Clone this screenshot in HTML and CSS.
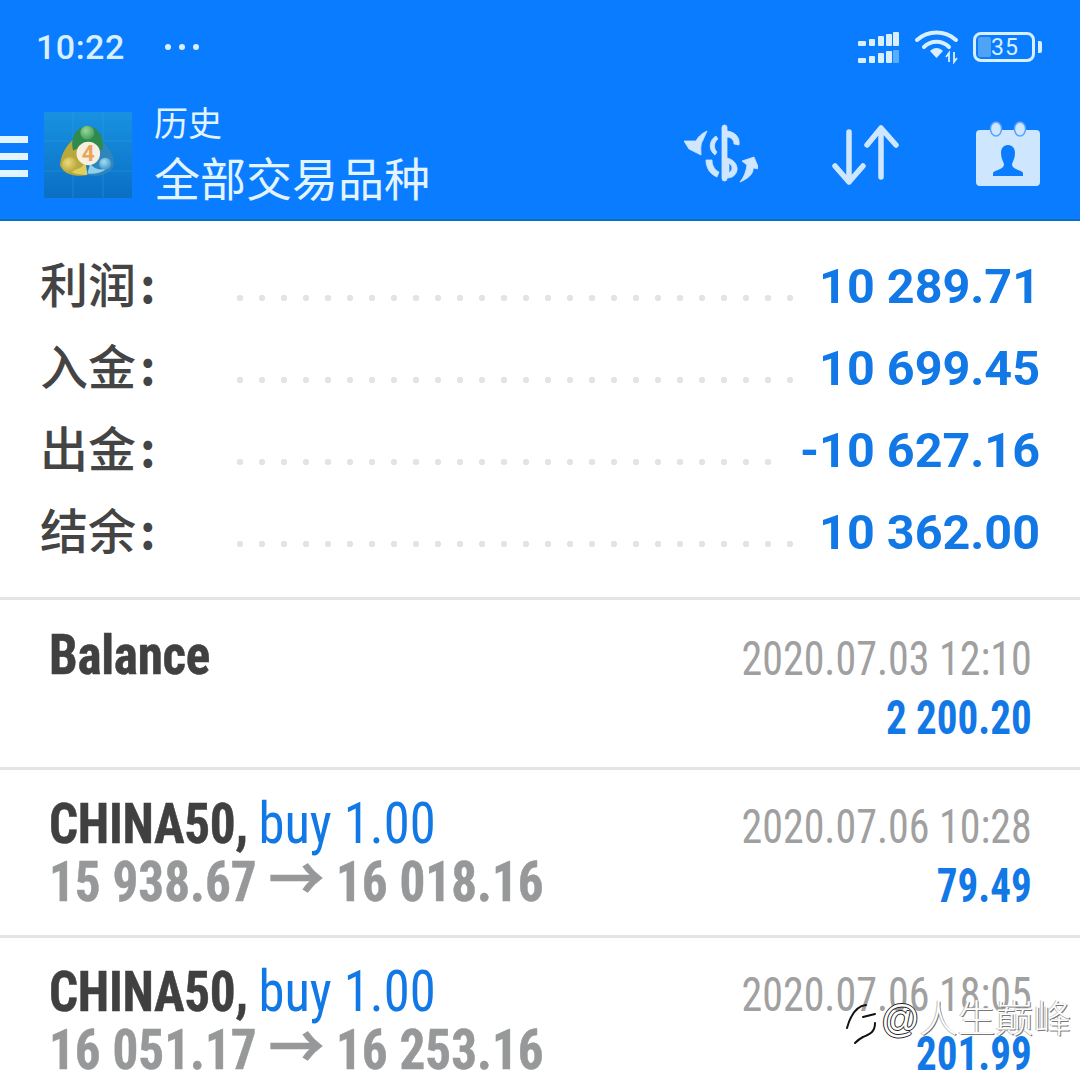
FILE: index.html
```html
<!DOCTYPE html>
<html lang="zh">
<head>
<meta charset="utf-8">
<title>历史</title>
<link rel="stylesheet" href="styles.css">
</head>
<body>
<div class="phone">
<header class="top">
  <div class="status">
    <div class="status-left"><span class="time">10:22</span><span class="more"><i></i><i></i><i></i></span></div>
    <div class="status-right">
      <svg class="signal" width="42" height="32" viewBox="0 0 42 32"><g fill="#d8efff"><rect x="0" y="9" width="8" height="5" rx="1"/><rect x="11" y="7" width="6" height="7" rx="1"/><rect x="20" y="4" width="6" height="10" rx="1"/><rect x="28" y="2" width="6" height="12" rx="1"/><rect x="35" y="0" width="6" height="14" rx="1"/><rect x="0" y="26" width="8" height="5" rx="1"/><rect x="11" y="24" width="6" height="7" rx="1"/><rect x="20" y="21" width="6" height="10" rx="1"/><rect x="28" y="19" width="6" height="12" rx="1"/><rect x="35" y="18" width="6" height="13" rx="1" fill="#5aaeff"/></g></svg>
      <svg class="wifi" width="44" height="34" viewBox="0 0 44 34"><g fill="none" stroke="#d8efff" stroke-width="4" stroke-linecap="round"><path d="M2 10C13 0 30 0 41 10"/><path d="M9 17C16 10 27 10 34 17"/></g><path d="M15 21C19 17 24 17 28 21L21.500 28Z" fill="#d8efff"/><path d="M34 32V23L31 27M39 22V32L42 28" fill="none" stroke="#d8efff" stroke-width="1.800"/></svg>
      <div class="battery"><div class="cell"><span class="charge"></span><span class="level">35</span></div><span class="nub"></span></div>
    </div>
  </div>
  <div class="bar">
    <div class="burger"><i></i><i></i><i></i></div>
    <svg class="logo" width="88" height="86" viewBox="0 0 88 86">
      <defs>
        <linearGradient id="lg" x1="0" y1="0" x2="0" y2="1"><stop offset="0" stop-color="#1892e0"/><stop offset="1" stop-color="#0b6fc4"/></linearGradient>
        <radialGradient id="gh" cx=".4" cy=".35" r=".7"><stop offset="0" stop-color="#9ad79a"/><stop offset="1" stop-color="#3d9a55"/></radialGradient>
        <radialGradient id="yh" cx=".4" cy=".35" r=".7"><stop offset="0" stop-color="#e8db7c"/><stop offset="1" stop-color="#b9a538"/></radialGradient>
        <radialGradient id="bh" cx=".4" cy=".35" r=".7"><stop offset="0" stop-color="#a5dcf0"/><stop offset="1" stop-color="#3a93c8"/></radialGradient>
      </defs>
      <rect width="88" height="86" fill="url(#lg)"/>
      <path d="M29 0V86M59 0V86M0 29H88M0 59H88" stroke="#3aa6e6" stroke-width="1" opacity=".35"/>
      <g transform="translate(2 1) scale(.94)">
        <path d="M44 66C32 68 20 66 15 56C15 44 24 30 33 26L42 52Z" fill="#b9a93c"/>
        <path d="M44 66C32 66 24 62 21 58C30 62 38 60 42 52Z" fill="#e0cf5e"/>
        <path d="M44 66C54 68 67 66 72 56C73 44 66 34 58 30L48 52Z" fill="#2f86bd"/>
        <path d="M44 64C54 66 62 62 66 58C58 62 52 60 47 54Z" fill="#8fd0ec"/>
        <path d="M29 40C25 26 33 14 44 14C56 14 63 28 60 40L45 33Z" fill="#2f8a4c"/>
        <circle cx="44" cy="21" r="7.500" fill="url(#gh)"/>
        <circle cx="25" cy="55" r="8" fill="url(#yh)"/>
        <circle cx="63" cy="54" r="6.500" fill="url(#bh)"/>
        <circle cx="45" cy="43" r="12.500" fill="#f6efe2"/>
        <text class="logo-four" x="45" y="51" text-anchor="middle">4</text>
      </g>
    </svg>
    <div class="titles">
      <div class="sub">历史</div>
      <div class="main">全部交易品种</div>
    </div>
    <div class="actions">
      <svg class="act-dollar" width="74" height="62" viewBox="0 0 74 62"><g fill="#cfe6ff" stroke="#cfe6ff" stroke-width=".8"><rect x="38" y="3" width="5" height="56" rx="2.500"/><path d="M43 9C52 10 56 16 55 23L50 22C50 18 47 15 43 15Z"/><path d="M32 14C25 18 24 28 31 33L33 30C29 26 30 20 34 17Z"/><path fill-rule="evenodd" d="M43 36C52 38 55 46 52 51C50 55 46 56 43 56ZM45 41V51C49 48 49 44 45 41Z"/><path d="M22 38C22 46 26 52 33 55L35 50C31 48 28 44 28 38Z"/><path d="M23 9C17 12 14 15 12 19L0 19L5 27L17 33C17 27 16 23 19 18C20 15 22 12 23 9Z"/><path d="M56 60C63 57 70 52 69 46L75 47L70 35L58 39L63 43C62 50 60 55 56 60Z"/></g></svg>
      <svg class="act-sort" width="70" height="62" viewBox="0 0 70 62"><g fill="none" stroke="#cfe6ff" stroke-width="5.500" stroke-linecap="round" stroke-linejoin="round"><path d="M18 7V57M4 41L18 57L32 41"/><path d="M50 3V52M36 20L50 3L65 20"/></g></svg>
      <svg class="act-cal" width="64" height="66" viewBox="0 0 64 66"><path d="M4 9H60Q64 9 64 13V61Q64 65 60 65H4Q0 65 0 61V13Q0 9 4 9Z" fill="#cfe6ff"/><g fill="#cfe6ff" stroke="#5aa6ff" stroke-width="1.500"><ellipse cx="20" cy="8" rx="5.500" ry="7"/><ellipse cx="44" cy="8" rx="5.500" ry="7"/></g><path d="M32 24C27 24 25 28 25 32C25 37 27 40 28 43C28 46 26 47 22 49C19 50 17 51 17 52V55H47V52C47 51 45 50 42 49C38 47 36 46 36 43C37 40 39 37 39 32C39 28 37 24 32 24Z" fill="#0a7cff"/></svg>
    </div>
  </div>
</header>
<main>
  <section class="summary">
    <div class="sum-row"><span class="sum-label">利润<span class="colon">:</span></span><span class="dots"></span><span class="sum-val">10 289.71</span></div>
    <div class="sum-row"><span class="sum-label">入金<span class="colon">:</span></span><span class="dots"></span><span class="sum-val">10 699.45</span></div>
    <div class="sum-row"><span class="sum-label">出金<span class="colon">:</span></span><span class="dots"></span><span class="sum-val">-10 627.16</span></div>
    <div class="sum-row"><span class="sum-label">结余<span class="colon">:</span></span><span class="dots"></span><span class="sum-val">10 362.00</span></div>
  </section>
  <section class="deal deal-balance">
    <div class="deal-left"><div class="line"><b class="sym">Balance</b></div></div>
    <div class="deal-right"><div class="date">2020.07.03 12:10</div><div class="profit">2 200.20</div></div>
  </section>
  <section class="deal">
    <div class="deal-left"><div class="line"><b class="sym">CHINA50,</b> <span class="buy">buy 1.00</span></div><div class="line prices">15 938.67 <span class="arrow">→</span> 16 018.16</div></div>
    <div class="deal-right"><div class="date">2020.07.06 10:28</div><div class="profit">79.49</div></div>
  </section>
  <section class="deal">
    <div class="deal-left"><div class="line"><b class="sym">CHINA50,</b> <span class="buy">buy 1.00</span></div><div class="line prices">16 051.17 <span class="arrow">→</span> 16 253.16</div></div>
    <div class="deal-right"><div class="date">2020.07.06 18:05</div><div class="profit">201.99</div></div>
  </section>
</main>
<div class="mark">
  <svg class="mark-icon" width="34" height="42" viewBox="0 0 34 42"><g fill="none" stroke="#111" stroke-width="2" stroke-linecap="round"><path d="M1 25C4 14 10 3 20 2"/><path d="M17 14L29 11"/><path d="M29 20C29 29 24 31 17 34C13 36 11 38 9 40"/></g></svg>
  <span class="mark-text"><span class="at">@</span>人生巅峰</span>
</div>
</div>
</body>
</html>
```
FILE: styles.css
```css
* { box-sizing: border-box; }
html, body { margin: 0; padding: 0; background: #fff; }
.phone { position: relative; width: 1080px; height: 1076px; overflow: hidden; background: #fff; font-family: Roboto, "Noto Sans CJK SC", sans-serif; }
.top { height: 221px; background: #0a7cff; border-bottom: 2px solid #0a6fc0; color: #e2f4ff; }
.status { height: 94px; display: flex; justify-content: space-between; align-items: center; padding: 0 38px 0 36px; }
.status-left { display: flex; align-items: center; gap: 40px; }
.time { font-size: 34px; font-weight: 500; letter-spacing: 0.5px; color: #d8efff; }
.more { display: flex; gap: 8px; }
.more i { width: 6px; height: 6px; border-radius: 50%; background: #d8efff; }
.status-right { display: flex; align-items: center; gap: 13px; }
.signal { margin-top: 2px; }
.wifi { margin-left: 2px; }
.battery { display: flex; align-items: center; gap: 3px; margin-left: 1px; }
.cell { position: relative; width: 62px; height: 30px; border: 3.500px solid #d8efff; border-radius: 8px; display: flex; align-items: center; justify-content: center; }
.charge { position: absolute; left: 2px; top: 2px; bottom: 2px; width: 13px; background: #4fa3f5; border-radius: 2px; }
.level { position: relative; font-size: 23px; line-height: 1; color: #d8efff; letter-spacing: 1px; margin-left: 2px; }
.nub { width: 4px; height: 12px; background: #d8efff; border-radius: 0 2px 2px 0; }
.bar { height: 125px; display: flex; align-items: flex-start; }
.burger { width: 28px; display: flex; flex-direction: column; gap: 10px; margin-top: 42px; }
.burger i { height: 7px; background: #e2f4ff; }
.logo { margin: 18px 0 0 16px; flex: none; }
.titles { margin-left: 22px; color: #e2f4ff; margin-top: 10px; }
.sub { font-size: 34px; line-height: 40px; }
.main { font-size: 46px; line-height: 60px; margin-top: 6px; }
.actions { margin-left: auto; display: flex; align-items: flex-start; padding-right: 40px; margin-top: 28px; }
.act-dollar { margin-right: 73px; }
.act-sort { margin-right: 75px; margin-top: 3px; }
.act-cal { margin-top: -1px; }
.summary { height: 379px; padding: 20px 40px 0 40px; border-bottom: 3px solid #e4e4e4; }
.sum-row { height: 82px; display: flex; align-items: center; }
.sum-label { width: 189px; font-size: 48px; font-weight: 500; color: #444; font-family: "Noto Sans CJK SC", sans-serif; }
.colon { margin-left: 4px; font-weight: 700; }
.dots { flex: 1; height: 8px; margin: 31px 25px 0 0; background-image: radial-gradient(circle, #e4e4e4 3px, transparent 3.500px); background-size: 22px 8px; background-repeat: repeat-x; }
.sum-val { font-size: 48.500px; font-weight: 700; color: #1278e6; white-space: nowrap; margin-top: 8px; }
.deal { height: 168px; display: flex; justify-content: space-between; padding: 25px 48px 0 49px; border-bottom: 3px solid #e4e4e4; }
.deal-balance { height: 170px; padding-top: 26px; }
.deal-balance .deal-right { margin-top: 3px; }
.line { font-size: 55px; line-height: 58px; white-space: nowrap; font-stretch: 75%; transform: scaleX(.93); transform-origin: 0 0; }
.sym { color: #404040; font-weight: 700; letter-spacing: -.3px; -webkit-text-stroke: .5px #404040; }
.buy { color: #1278e6; font-size: 56.600px; margin-left: -1px; }
.prices { color: #979899; font-weight: 700; -webkit-text-stroke: .5px #979899; }
.arrow { font-size: 60px; line-height: 0; }
.deal-right { text-align: right; margin-top: 2px; }
.date { font-size: 49px; line-height: 59px; color: #a0a0a0; white-space: nowrap; font-stretch: 75%; transform: scaleX(.857); transform-origin: 100% 0; }
.profit { font-size: 49px; line-height: 59px; font-weight: 700; color: #1278e6; font-stretch: 75%; transform: scaleX(.838); transform-origin: 100% 0; }
.mark { position: absolute; left: 846px; top: 993px; display: flex; align-items: center; gap: 1px; }
.mark-icon { margin-top: 10px; }
.mark-text { font-size: 38px; line-height: 42px; font-family: "Liberation Sans", "Noto Sans CJK SC", sans-serif; font-weight: 300; color: #fff; text-shadow: 1px 1px 0 #777, -1px 0 0 #bbb; }
.at { text-shadow: 1px 0 0 #222, -1px 0 0 #222, 0 1px 0 #222, 0 -1px 0 #222; }
.logo-four { font-size: 24px; font-weight: 700; fill: #eaa45c; font-family: Roboto, sans-serif; }
```
